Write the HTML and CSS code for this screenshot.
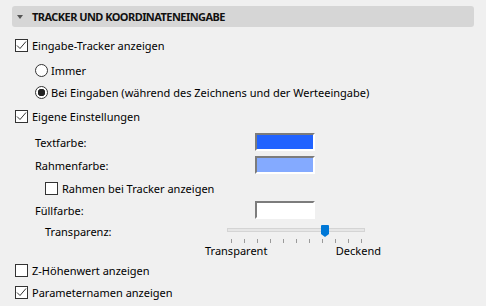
FILE: index.html
```html
<!DOCTYPE html>
<html lang="de">
  <head>
    <meta charset="UTF-8" />
    <title>Tracker und Koordinateneingabe</title>
    <link rel="stylesheet" href="styles.css">
  </head>
  <body>
    <div class="panel">
      <div class="section-head">
        <span class="caret"></span>TRACKER UND KOORDINATENEINGABE
      </div>

      <div class="row first">
        <span class="check"><svg viewBox="0 0 11 11"><polyline points="1,5.5 4,8.5 10,1.5" /></svg></span>
        Eingabe-Tracker anzeigen
      </div>
      <div class="row radio-row gap3">
        <span class="radio"></span>Immer
      </div>
      <div class="row radio-row">
        <span class="radio on"></span>Bei Eingaben (während des Zeichnens und der Werteeingabe)
      </div>
      <div class="row gap2">
        <span class="check"><svg viewBox="0 0 11 11"><polyline points="1,5.5 4,8.5 10,1.5" /></svg></span>
        Eigene Einstellungen
      </div>

      <div class="row field gap4">
        <span class="field-label">Textfarbe:</span>
        <span class="swatch blue"></span>
      </div>
      <div class="row field gap1">
        <span class="field-label">Rahmenfarbe:</span>
        <span class="swatch light-blue"></span>
      </div>
      <div class="row sub gap1">
        <span class="check empty"></span>Rahmen bei Tracker anzeigen
      </div>
      <div class="row field">
        <span class="field-label">Füllfarbe:</span>
        <span class="swatch white"></span>
      </div>

      <div class="slider-row">
        <span class="slider-label">Transparenz:</span>
        <div class="slider">
          <div class="track-area">
            <div class="track"></div>
            <span class="thumb"></span>
          </div>
          <div class="ticks">
            <i></i><i></i><i></i><i></i><i></i><i></i><i></i><i></i><i></i><i></i><i></i>
          </div>
          <div class="slider-ends">
            <span>Transparent</span>
            <span>Deckend</span>
          </div>
        </div>
      </div>

      <div class="row">
        <span class="check empty"></span>Z-Höhenwert anzeigen
      </div>
      <div class="row">
        <span class="check"><svg viewBox="0 0 11 11"><polyline points="1,5.5 4,8.5 10,1.5" /></svg></span>
        Parameternamen anzeigen
      </div>
    </div>
  </body>
</html>
```

FILE: styles.css
```css
body {
  margin: 0;
  background: #f0f0f0;
  color: #000;
  font-family: "Noto Sans", "Open Sans", sans-serif;
  font-size: 11px;
}
.panel {
  display: flex;
  flex-direction: column;
  padding-top: 6px;
}
.section-head {
  display: flex;
  align-items: center;
  height: 21px;
  margin: 0 12px;
  padding-left: 5px;
  background: #d6d6d6;
  border-radius: 3px;
  font-weight: 700;
  letter-spacing: -0.55px;
  color: #111;
}
.caret {
  width: 0;
  height: 0;
  margin-right: 9px;
  border-left: 3.5px solid transparent;
  border-right: 3.5px solid transparent;
  border-top: 4px solid #555;
}
.row {
  display: flex;
  align-items: center;
  height: 22px;
  padding-left: 15px;
  white-space: nowrap;
}
.first {
  margin-top: 7px;
}
.gap1 {
  margin-top: 1px;
}
.gap2 {
  margin-top: 2px;
}
.gap3 {
  margin-top: 3px;
}
.gap4 {
  margin-top: 4px;
}
.check {
  display: flex;
  align-items: center;
  justify-content: center;
  flex: none;
  width: 13px;
  height: 13px;
  margin-right: 4px;
  box-sizing: border-box;
  border: 1px solid #333;
  background: #fff;
}
.check svg {
  width: 11px;
  height: 11px;
}
.check polyline {
  fill: none;
  stroke: #333;
  stroke-width: 1;
}
.radio-row {
  padding-left: 35px;
}
.radio {
  flex: none;
  width: 13px;
  height: 13px;
  margin-right: 3px;
  box-sizing: border-box;
  border: 1px solid #333;
  border-radius: 50%;
  background: #fff;
}
.radio.on {
  background: radial-gradient(circle, #222 0 3.5px, #fff 4px);
}
.field {
  padding-left: 35px;
}
.field-label {
  width: 220px;
}
.swatch {
  width: 60px;
  height: 18px;
  box-sizing: border-box;
  border: 2px solid;
  border-color: #7c7c7c #fff #fff #7c7c7c;
}
.blue {
  background: #2163ff;
}
.light-blue {
  background: #84aaff;
}
.white {
  background: #fff;
}
.sub {
  padding-left: 45px;
}
.slider-row {
  display: flex;
  margin-top: 2px;
  padding-left: 45px;
}
.slider-label {
  width: 160px;
  line-height: 16px;
  margin-top: 1px;
}
.slider {
  display: flex;
  flex-direction: column;
  width: 176px;
}
.track-area {
  position: relative;
  height: 14px;
  margin: 0 16px 0 22px;
}
.track {
  margin-top: 5px;
  height: 4px;
  box-sizing: border-box;
  border: 1px solid #d4d4d4;
  background: #e6e6e6;
}
.thumb {
  position: absolute;
  left: 94px;
  top: 2px;
  width: 8px;
  height: 9px;
  background: #0078d7;
  border-radius: 1px 1px 0 0;
}
.thumb::after {
  content: "";
  position: absolute;
  left: 0;
  top: 9px;
  border-left: 4px solid transparent;
  border-right: 4px solid transparent;
  border-top: 3px solid #0078d7;
}
.ticks {
  display: flex;
  justify-content: space-between;
  height: 4px;
  margin: 2px 19px 0 26px;
}
.ticks i {
  width: 1px;
  background: #9a9a9a;
}
.slider-ends {
  display: flex;
  justify-content: space-between;
  line-height: 16px;
}
```
